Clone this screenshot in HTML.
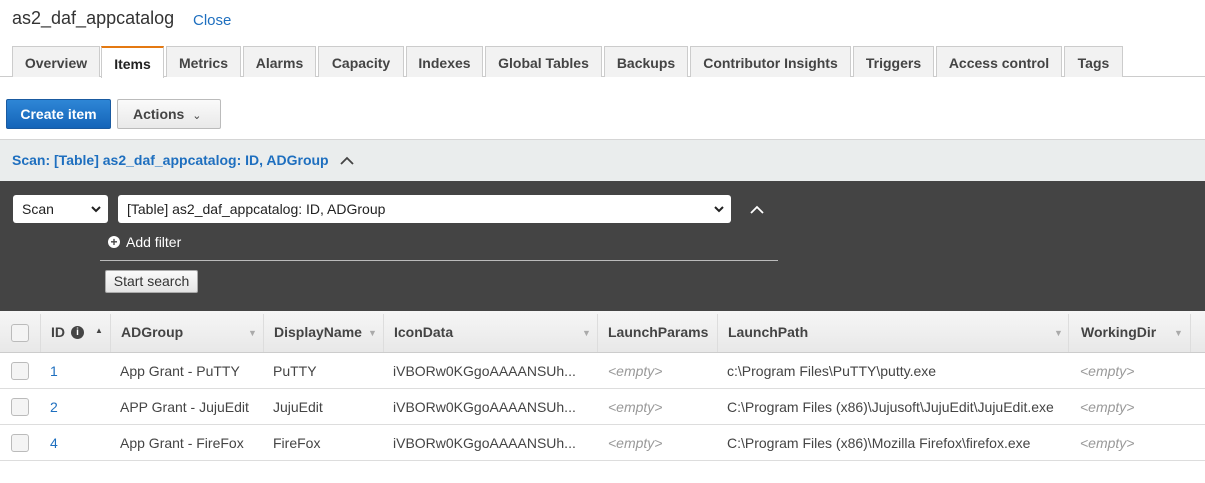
<!DOCTYPE html>
<html><head><style>
*{box-sizing:border-box;margin:0;padding:0}
body{width:1205px;height:483px;background:#fff;font-family:"Liberation Sans",Arial,sans-serif;font-size:14px;color:#444;position:relative;overflow:hidden}
.a{position:absolute;white-space:nowrap}
.tab{position:absolute;top:46px;height:31px;background:#f2f2f2;border:1px solid #ccc;border-bottom:none;font-weight:bold;font-size:14px;color:#444;text-align:center;line-height:32px}
.hd{position:absolute;top:312px;height:41px;font-weight:bold;color:#444;line-height:41px;font-size:14px}
.dv{position:absolute;top:314px;height:38px;width:1px;background:#ddd}
.row{position:absolute;left:0;width:1205px;height:36px;border-bottom:1px solid #ddd}
.cb{position:absolute;left:11px;width:18px;height:18px;border:1px solid #bbb;border-radius:3px;background:#f4f4f4}
.c{position:absolute;line-height:36px;font-size:14px;color:#444}
.e{color:#999;font-style:italic}
.car{color:#aaa;font-size:9px;position:absolute}
</style></head><body>
<div class="a" style="left:12px;top:8px;font-size:18px;color:#333">as2_daf_appcatalog</div>
<div class="a" style="left:193px;top:12px;font-size:15px;color:#1e6fbf">Close</div>
<div class="a" style="left:0;top:76px;width:1205px;height:1px;background:#ccc"></div>
<div class="tab" style="left:12px;width:88px">Overview</div>
<div class="tab" style="left:101px;width:63px;background:#fff;border-top:2px solid #e47911;height:32px;color:#222">Items</div>
<div class="tab" style="left:166px;width:75px">Metrics</div>
<div class="tab" style="left:243px;width:73px">Alarms</div>
<div class="tab" style="left:318px;width:86px">Capacity</div>
<div class="tab" style="left:406px;width:77px">Indexes</div>
<div class="tab" style="left:485px;width:117px">Global Tables</div>
<div class="tab" style="left:604px;width:84px">Backups</div>
<div class="tab" style="left:690px;width:161px">Contributor Insights</div>
<div class="tab" style="left:853px;width:81px">Triggers</div>
<div class="tab" style="left:936px;width:126px">Access control</div>
<div class="tab" style="left:1064px;width:59px">Tags</div>

<div class="a" style="left:6px;top:99px;width:105px;height:30px;background:linear-gradient(#2e86d6,#1464b8);border:1px solid #1a5aa0;border-radius:2px;color:#fff;font-weight:bold;text-align:center;line-height:29px">Create item</div>
<div class="a" style="left:117px;top:99px;width:104px;height:30px;background:linear-gradient(#fafafa,#e9e9e9);border:1px solid #bbb;border-radius:2px;color:#444;font-weight:bold;line-height:29px;padding-left:15px">Actions <span style="font-weight:normal;font-size:11px;margin-left:4px">&#8964;</span></div>

<div class="a" style="left:0;top:139px;width:1205px;height:42px;background:#eaeded;border-top:1px solid #d5d5d5"></div>
<div class="a" style="left:12px;top:152px;font-size:14px;font-weight:bold;color:#1e6fbf">Scan: [Table] as2_daf_appcatalog: ID, ADGroup</div>
<svg class="a" style="left:340px;top:156px" width="14" height="10"><path d="M1 8 L7 2 L13 8" stroke="#444" stroke-width="1.8" fill="none"/></svg>

<div class="a" style="left:0;top:181px;width:1205px;height:130px;background:#444"></div>
<div class="a" style="left:13px;top:195px;width:95px;height:28px;background:#fff;border-radius:3px;line-height:28px;padding-left:9px;color:#222">Scan<svg style="position:absolute;right:7px;top:11px" width="10" height="7"><path d="M1 1 L5 5 L9 1" stroke="#222" stroke-width="2" fill="none"/></svg></div>
<div class="a" style="left:118px;top:195px;width:613px;height:28px;background:#fff;border-radius:3px;line-height:28px;padding-left:9px;color:#222">[Table] as2_daf_appcatalog: ID, ADGroup<svg style="position:absolute;right:7px;top:11px" width="10" height="7"><path d="M1 1 L5 5 L9 1" stroke="#222" stroke-width="2" fill="none"/></svg></div>
<svg class="a" style="left:750px;top:205px" width="14" height="10"><path d="M1 8 L7 2 L13 8" stroke="#fff" stroke-width="1.8" fill="none"/></svg>
<div class="a" style="left:108px;top:236px;width:12px;height:12px;border-radius:50%;background:#fff;color:#444;font-size:12px;font-weight:bold;line-height:12px;text-align:center">+</div>
<div class="a" style="left:126px;top:234px;color:#fff;font-size:14px">Add filter</div>
<div class="a" style="left:100px;top:260px;width:678px;height:1px;background:#bbb"></div>
<div class="a" style="left:105px;top:270px;width:93px;height:23px;background:linear-gradient(#fafafa,#e4e4e4);border:1px solid #aaa;border-radius:2px;color:#333;font-size:14px;text-align:center;line-height:21px">Start search</div>

<div class="a" style="left:0;top:311px;width:1205px;height:42px;background:linear-gradient(#f6f6f6,#e8e8e8);border-bottom:1px solid #ccc"></div>
<div class="cb" style="top:324px"></div>
<div class="dv" style="left:40px"></div><div class="dv" style="left:110px"></div><div class="dv" style="left:263px"></div><div class="dv" style="left:383px"></div><div class="dv" style="left:597px"></div><div class="dv" style="left:717px"></div><div class="dv" style="left:1068px"></div><div class="dv" style="left:1190px"></div>
<div class="hd" style="left:51px">ID</div>
<div class="a" style="left:71px;top:326px;width:13px;height:13px;border-radius:50%;background:#444;color:#fff;font-size:10px;font-weight:bold;text-align:center;line-height:13px">i</div>
<div class="a" style="left:95px;top:326px;font-size:8px;color:#444">&#9650;</div>
<div class="hd" style="left:121px">ADGroup</div><span class="car" style="left:248px;top:328px">&#9660;</span>
<div class="hd" style="left:274px">DisplayName</div><span class="car" style="left:368px;top:328px">&#9660;</span>
<div class="hd" style="left:394px">IconData</div><span class="car" style="left:582px;top:328px">&#9660;</span>
<div class="hd" style="left:608px">LaunchParams</div>
<div class="hd" style="left:728px">LaunchPath</div><span class="car" style="left:1054px;top:328px">&#9660;</span>
<div class="hd" style="left:1081px">WorkingDir</div><span class="car" style="left:1174px;top:328px">&#9660;</span>

<div class="row" style="top:353px"><div class="cb" style="top:9px"></div>
<div class="c" style="left:50px;color:#1e6fbf">1</div><div class="c" style="left:120px">App Grant - PuTTY</div><div class="c" style="left:273px">PuTTY</div><div class="c" style="left:393px">iVBORw0KGgoAAAANSUh...</div><div class="c e" style="left:608px">&lt;empty&gt;</div><div class="c" style="left:727px">c:\Program Files\PuTTY\putty.exe</div><div class="c e" style="left:1080px">&lt;empty&gt;</div></div>
<div class="row" style="top:389px"><div class="cb" style="top:9px"></div>
<div class="c" style="left:50px;color:#1e6fbf">2</div><div class="c" style="left:120px">APP Grant - JujuEdit</div><div class="c" style="left:273px">JujuEdit</div><div class="c" style="left:393px">iVBORw0KGgoAAAANSUh...</div><div class="c e" style="left:608px">&lt;empty&gt;</div><div class="c" style="left:727px">C:\Program Files (x86)\Jujusoft\JujuEdit\JujuEdit.exe</div><div class="c e" style="left:1080px">&lt;empty&gt;</div></div>
<div class="row" style="top:425px"><div class="cb" style="top:9px"></div>
<div class="c" style="left:50px;color:#1e6fbf">4</div><div class="c" style="left:120px">App Grant - FireFox</div><div class="c" style="left:273px">FireFox</div><div class="c" style="left:393px">iVBORw0KGgoAAAANSUh...</div><div class="c e" style="left:608px">&lt;empty&gt;</div><div class="c" style="left:727px">C:\Program Files (x86)\Mozilla Firefox\firefox.exe</div><div class="c e" style="left:1080px">&lt;empty&gt;</div></div>
</body></html>
